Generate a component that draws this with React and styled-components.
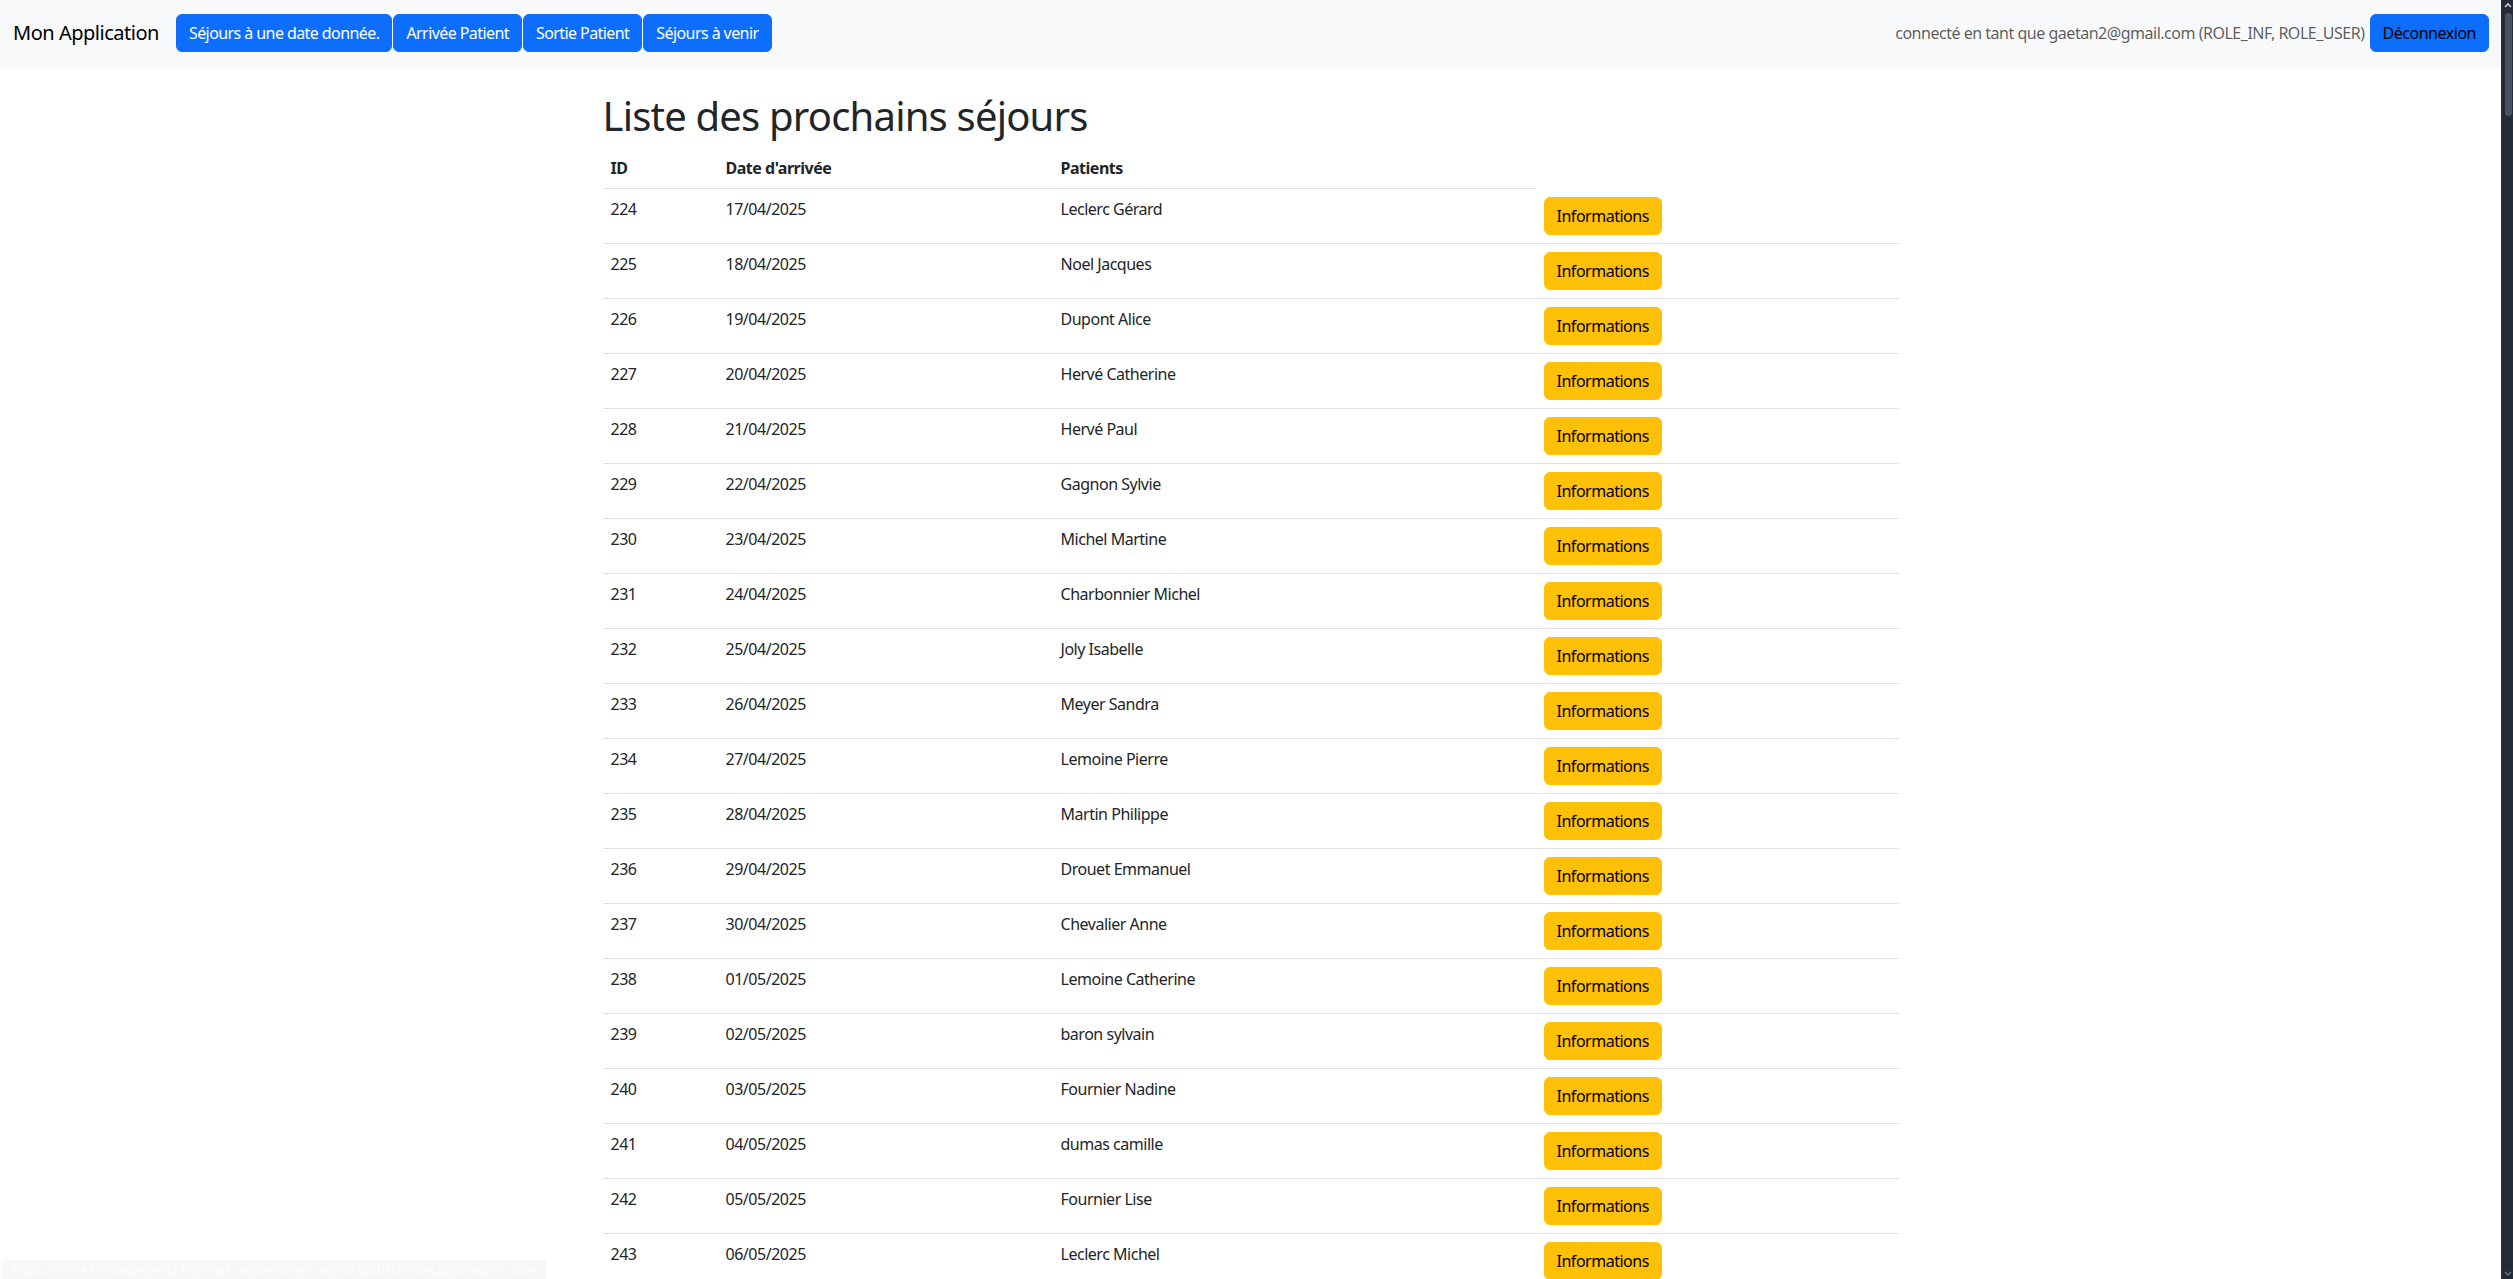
import React from 'react';
import styled, { createGlobalStyle } from 'styled-components';

const GlobalStyle = createGlobalStyle`
  html, body {
    margin: 0;
    background: #fff;
    color: #212529;
    font-family: "Segoe UI", "Noto Sans", "Liberation Sans", sans-serif;
    font-size: 16px;
    line-height: 1.5;
    letter-spacing: -0.03em;
  }

  *, *::before, *::after {
    box-sizing: border-box;
  }
`;

const Page = styled.div`
  margin-right: 12px;
`;

const Navbar = styled.nav`
  display: flex;
  align-items: center;
  height: 68px;
  padding: 14px 12px 16px 13px;
  background: #f8f9fa;
`;

const Brand = styled.span`
  font-size: 20px;
  line-height: 30px;
  color: #000;
  margin-right: 17px;
  white-space: nowrap;
`;

const NavButtons = styled.div`
  display: flex;
  gap: 1px;
`;

const Button = styled.button`
  font-family: inherit;
  font-size: 16px;
  letter-spacing: ${(p) => (p.$tight ? '-0.036em' : 'inherit')};
  line-height: 24px;
  padding: 6px 12px;
  border-radius: 6px;
  border: 1px solid ${(p) => (p.$variant === 'warning' ? '#ffc107' : '#0d6efd')};
  background: ${(p) => (p.$variant === 'warning' ? '#ffc107' : '#0d6efd')};
  color: ${(p) => (p.$dark ? '#000' : '#fff')};
  white-space: nowrap;
  cursor: pointer;
`;

const UserBox = styled.div`
  margin-left: auto;
  display: flex;
  align-items: center;
  gap: 5px;
`;

const UserText = styled.span`
  color: rgba(0, 0, 0, 0.65);
  white-space: nowrap;
`;

const Container = styled.main`
  max-width: 1320px;
  margin: 0 auto;
  padding: 24px 12px 0;
`;

const Title = styled.h1`
  margin: 0 0 8px;
  font-size: 40px;
  font-weight: 400;
  letter-spacing: -0.02em;
  line-height: 1.2;
`;

const Table = styled.table`
  width: 100%;
  table-layout: fixed;
  border-collapse: collapse;
  vertical-align: top;
`;

const Col = styled.col`
  width: ${(p) => p.$width || 'auto'};
`;

const HeadCell = styled.th`
  text-align: left;
  font-weight: 700;
  padding: 8px;
  border-bottom: 1px solid #dee2e6;
`;

const Cell = styled.td`
  padding: 8px;
  border-bottom: 1px solid #dee2e6;
  vertical-align: top;
`;

const StatusBubble = styled.div`
  position: fixed;
  left: 2px;
  bottom: 0;
  height: 19px;
  padding: 0 10px;
  background: #f7f7f7;
  color: #fdfdfd;
  font-size: 12.7px;
  letter-spacing: 0;
  line-height: 19px;
  white-space: nowrap;
`;

/* the browser's own scrollbar, drawn over the right edge */
const ScrollTrack = styled.div`
  position: fixed;
  top: 0;
  right: 0;
  width: 12px;
  height: 100vh;
  background: #252a37;
`;

const ScrollThumb = styled.div`
  position: absolute;
  top: 13px;
  left: 4px;
  width: 7px;
  height: 103px;
  border-radius: 4px;
  background: #4b5062;
`;

const ScrollArrow = styled.svg`
  position: absolute;
  left: 3px;
  ${(p) => (p.$down ? 'bottom: 2px;' : 'top: 2px;')}
  width: 8px;
  height: 6px;
`;

const visibleNames = [
  'Leclerc Gérard',
  'Noel Jacques',
  'Dupont Alice',
  'Hervé Catherine',
  'Hervé Paul',
  'Gagnon Sylvie',
  'Michel Martine',
  'Charbonnier Michel',
  'Joly Isabelle',
  'Meyer Sandra',
  'Lemoine Pierre',
  'Martin Philippe',
  'Drouet Emmanuel',
  'Chevalier Anne',
  'Lemoine Catherine',
  'baron sylvain',
  'Fournier Nadine',
  'dumas camille',
  'Fournier Lise',
  'Leclerc Michel',
];

const pad = (n) => String(n).padStart(2, '0');

// 20 rows are on screen, the rest keeps the page as long as the real one
const sejours = Array.from({ length: 60 }, (_, i) => {
  const d = new Date(2025, 3, 17 + i);
  return {
    id: 224 + i,
    date: `${pad(d.getDate())}/${pad(d.getMonth() + 1)}/${d.getFullYear()}`,
    patient: visibleNames[i % visibleNames.length],
  };
});

const App = () => {
  return (
    <Page>
      <GlobalStyle />
      <Navbar>
        <Brand>Mon Application</Brand>
        <NavButtons>
          <Button $tight>Séjours à une date donnée.</Button>
          <Button $tight>Arrivée Patient</Button>
          <Button $tight>Sortie Patient</Button>
          <Button $tight>Séjours à venir</Button>
        </NavButtons>
        <UserBox>
          <UserText>
            connecté en tant que gaetan2@gmail.com (ROLE_INF, ROLE_USER)
          </UserText>
          <Button $dark>Déconnexion</Button>
        </UserBox>
      </Navbar>
      <Container>
        <Title>Liste des prochains séjours</Title>
        <Table>
          <colgroup>
            <Col $width="115px" />
            <Col $width="335px" />
            <Col $width="483px" />
            <Col />
          </colgroup>
          <thead>
            <tr>
              <HeadCell>ID</HeadCell>
              <HeadCell>Date d'arrivée</HeadCell>
              <HeadCell>Patients</HeadCell>
            </tr>
          </thead>
          <tbody>
            {sejours.map((s) => (
              <tr key={s.id}>
                <Cell>{s.id}</Cell>
                <Cell>{s.date}</Cell>
                <Cell>{s.patient}</Cell>
                <Cell>
                  <Button $variant="warning" $dark>
                    Informations
                  </Button>
                </Cell>
              </tr>
            ))}
          </tbody>
        </Table>
      </Container>
      <StatusBubble>
        https://c5-5477.nuage-peda.fr/projet_sejour/projet_sejour/public/index.php/sejour_date
      </StatusBubble>
      <ScrollTrack>
        <ScrollArrow viewBox="0 0 8 6">
          <path d="M1 5 L4 2 L7 5" fill="none" stroke="#c9cbd1" strokeWidth="1.6" />
        </ScrollArrow>
        <ScrollThumb />
        <ScrollArrow $down viewBox="0 0 8 6">
          <path d="M1 1 L4 4 L7 1" fill="none" stroke="#6b6f7a" strokeWidth="1.6" />
        </ScrollArrow>
      </ScrollTrack>
    </Page>
  );
};

export default App;
